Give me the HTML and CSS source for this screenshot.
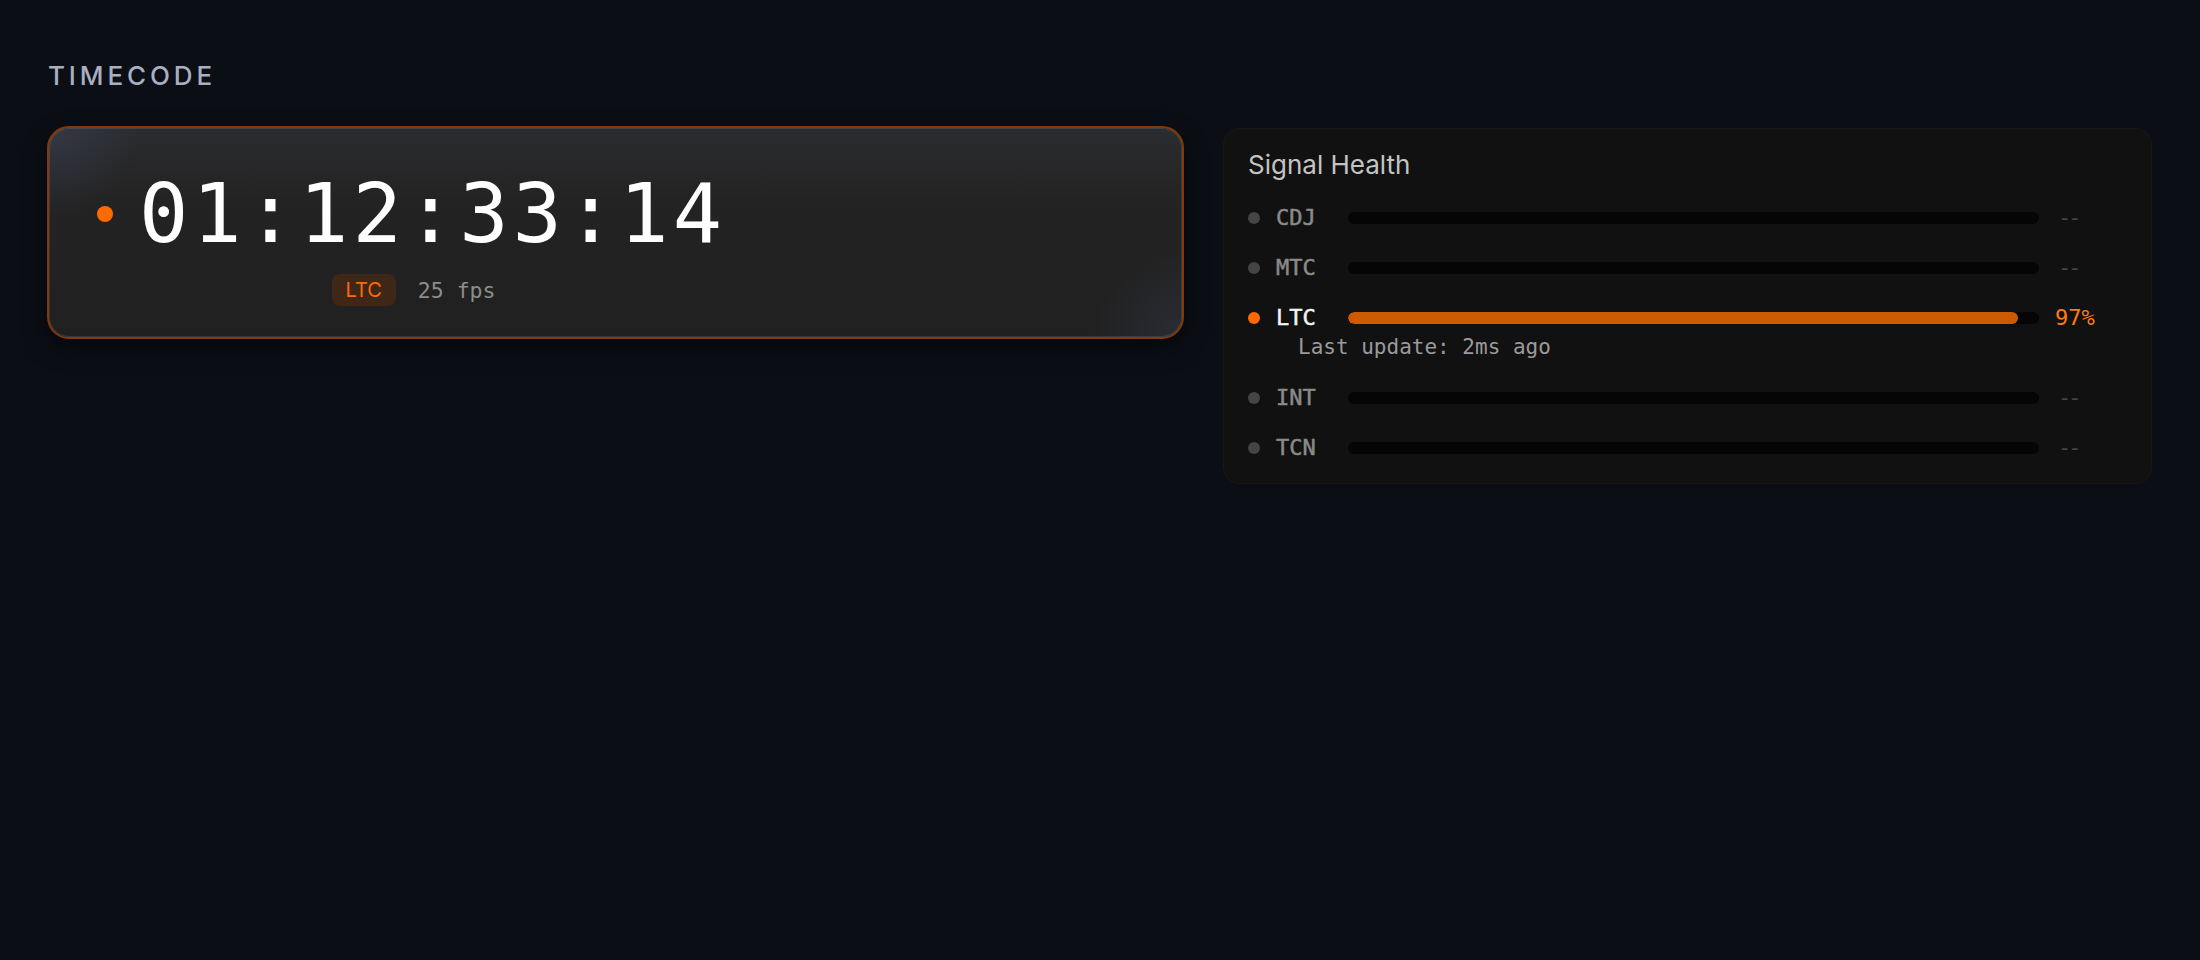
FILE: index.html
```html
<!DOCTYPE html>
<html lang="en">
<head>
  <meta charset="UTF-8">
  <meta name="viewport" content="width=device-width, initial-scale=1.0">
  <title>Timecode</title>
  <link rel="stylesheet" href="styles.css">
</head>
<body>
  <div class="page">
    <h2 class="section-label">TIMECODE</h2>

    <div class="panels">
      <!-- Big timecode readout -->
      <div class="timecode-card">
        <div class="timecode-block">
          <div class="time-row">
            <span class="live-dot"></span>
            <span class="time">01:12:33:14</span>
          </div>
          <div class="meta-row">
            <span class="source-badge">LTC</span>
            <span class="fps">25 fps</span>
          </div>
        </div>
      </div>

      <!-- Signal health list -->
      <div class="health-card">
        <h3 class="health-title">Signal Health</h3>
        <div class="signal-list">
          <div class="signal">
            <div class="signal-row">
              <span class="signal-dot"></span>
              <span class="signal-name">CDJ</span>
              <div class="bar"></div>
              <span class="signal-value empty">--</span>
            </div>
          </div>
          <div class="signal">
            <div class="signal-row">
              <span class="signal-dot"></span>
              <span class="signal-name">MTC</span>
              <div class="bar"></div>
              <span class="signal-value empty">--</span>
            </div>
          </div>
          <div class="signal active">
            <div class="signal-row">
              <span class="signal-dot"></span>
              <span class="signal-name">LTC</span>
              <div class="bar"><div class="bar-fill" style="width: 97%"></div></div>
              <span class="signal-value">97%</span>
            </div>
            <div class="signal-note">Last update: 2ms ago</div>
          </div>
          <div class="signal">
            <div class="signal-row">
              <span class="signal-dot"></span>
              <span class="signal-name">INT</span>
              <div class="bar"></div>
              <span class="signal-value empty">--</span>
            </div>
          </div>
          <div class="signal">
            <div class="signal-row">
              <span class="signal-dot"></span>
              <span class="signal-name">TCN</span>
              <div class="bar"></div>
              <span class="signal-value empty">--</span>
            </div>
          </div>
        </div>
      </div>
    </div>
  </div>
</body>
</html>
```

FILE: styles.css
```css
body {
  margin: 0;
  background-color: #0b0e14;
  font-family: Inter, "Noto Sans", sans-serif;
  color: #ddd;
  min-height: 100vh;
}

.page {
  padding: 60px 48px 0 47px;
}

.section-label {
  margin: 0 0 34px 1px;
  font-size: 26px;
  line-height: 32px;
  font-weight: 500;
  letter-spacing: 0.15em;
  color: #a9afc2;
}

.panels {
  display: grid;
  grid-template-columns: 1fr 929px;
  gap: 39px;
  align-items: start;
}

/* timecode card */
.timecode-card {
  border: 2px solid #83390a;
  border-radius: 22px;
  padding: 44px 48px 31px;
  background:
    radial-gradient(circle at 0 0, rgba(70, 80, 110, 0.35), rgba(70, 80, 110, 0) 90px),
    radial-gradient(circle at 100% 100%, rgba(70, 80, 110, 0.25), rgba(70, 80, 110, 0) 90px),
    linear-gradient(180deg, #2b2c2f 0%, #232323 35%, #202020 100%);
  box-shadow: inset 0 0 0 1px rgba(255, 255, 255, 0.1), 0 10px 24px rgba(0, 0, 0, 0.45);
}

.timecode-block {
  display: inline-flex;
  flex-direction: column;
  align-items: center;
}

.time-row {
  display: flex;
  align-items: center;
  gap: 26px;
}

.live-dot {
  width: 16px;
  height: 16px;
  border-radius: 50%;
  background-color: #ff6a00;
}

.time {
  font-family: "DejaVu Sans Mono", monospace;
  font-size: 82px;
  line-height: 84px;
  letter-spacing: 4px;
  color: #fff;
}

.meta-row {
  display: flex;
  align-items: center;
  gap: 22px;
  margin-top: 18px;
  margin-left: 4px;
}

.source-badge {
  background-color: #3e2717;
  color: #ff6a00;
  font-size: 20px;
  line-height: 32px;
  padding: 0 14px;
  border-radius: 8px;
}

.fps {
  font-family: "DejaVu Sans Mono", monospace;
  font-size: 21.5px;
  color: #8c8c8c;
}

/* signal health */
.health-card {
  margin-top: 2px;
  background-color: #111111;
  border: 1px solid #171717;
  border-radius: 16px;
  padding: 20px 24px 24px;
}

.health-title {
  margin: 0 0 24px;
  font-size: 26px;
  line-height: 32px;
  font-weight: 400;
  color: #c4c4c4;
}

.signal-list {
  display: flex;
  flex-direction: column;
  gap: 26px;
}

.signal-row {
  display: grid;
  grid-template-columns: 12px 56px 1fr 72px;
  column-gap: 16px;
  align-items: center;
  height: 24px;
}

.signal-dot {
  width: 12px;
  height: 12px;
  border-radius: 50%;
  background-color: #454545;
}

.signal-name {
  font-family: "DejaVu Sans Mono", monospace;
  font-size: 22px;
  -webkit-text-stroke: 0.5px currentColor;
  color: #8a8a8a;
}

.bar {
  height: 12px;
  border-radius: 6px;
  background-color: #050505;
  overflow: hidden;
}

.bar-fill {
  height: 100%;
  border-radius: 6px;
  background-color: #cc5a00;
}

.signal-value {
  font-family: "DejaVu Sans Mono", monospace;
  font-size: 22px;
  color: #454545;
}

.signal-value.empty {
  letter-spacing: -3px;
  padding-left: 3px;
}

.signal.active .signal-dot {
  background-color: #ff6a00;
}

.signal.active .signal-name {
  color: #f4f4f4;
}

.signal.active .signal-value {
  color: #ff7a14;
}

.signal-note {
  margin: 6px 0 0 50px;
  font-family: "DejaVu Sans Mono", monospace;
  font-size: 21px;
  line-height: 24px;
  color: #9a9a9a;
}
```
